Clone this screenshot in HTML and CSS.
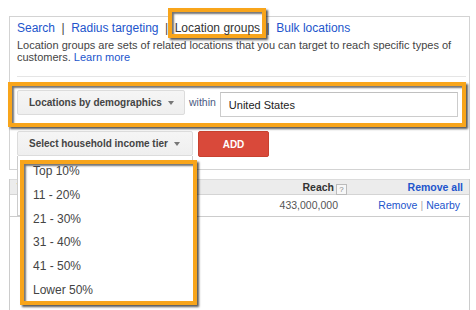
FILE: index.html
```html
<!DOCTYPE html>
<html lang="en">
<head>
    <meta charset="UTF-8">
    <meta name="viewport" content="width=device-width, initial-scale=1.0">
    <title>Location groups</title>
    <link rel="stylesheet" href="styles.css">
</head>
<body>
    <div class="panel">
        <div class="tabs">
            <a class="tab" href="#">Search</a><span class="sep">|</span><a class="tab" href="#">Radius targeting</a><span class="sep">|</span><span class="tab tab-current">Location groups</span><span class="sep">|</span><a class="tab" href="#">Bulk locations</a>
        </div>
        <p class="desc">Location groups are sets of related locations that you can target to reach specific types of customers. <a href="#">Learn more</a></p>

        <div class="row row-demo">
            <button class="btn btn-demo">Locations by demographics <span class="caret"></span></button>
            <span class="within">within</span>
            <input class="loc-input" type="text" value="United States">
        </div>

        <div class="row row-tier">
            <div class="select-wrap">
                <button class="btn btn-tier">Select household income tier <span class="caret"></span></button>
                <div class="menu-frame"></div>
                <ul class="menu">
                    <li>Top 10%</li>
                    <li>11 - 20%</li>
                    <li>21 - 30%</li>
                    <li>31 - 40%</li>
                    <li>41 - 50%</li>
                    <li>Lower 50%</li>
                </ul>
            </div>
            <button class="btn-add">ADD</button>
        </div>
    </div>

    <div class="results">
        <div class="results-head">
            <div class="head-loc">Targeted locations</div>
            <div class="head-reach">Reach<span class="help">?</span></div>
            <div class="head-actions">Remove all</div>
        </div>
        <div class="results-row">
            <div class="cell-loc"><a href="#">United States</a></div>
            <div class="cell-reach">433,000,000</div>
            <div class="cell-actions"><a href="#">Remove</a><span class="bar">|</span><a href="#">Nearby</a></div>
        </div>
    </div>
</body>
</html>
```

FILE: styles.css
```css
body {
    margin: 0;
    height: 310px;
    overflow: hidden;
    font-family: "Liberation Sans", Arial, sans-serif;
    color: #333333;
    background: #ffffff;
}

a {
    color: #2255cc;
    text-decoration: none;
}

.panel {
    position: relative;
    margin: 16px 6px 0 9px;
    border: 1px solid #d3d3d3;
    padding: 4px 3px 12px 7px;
}

.tabs {
    font-size: 12px;
    line-height: 14px;
    white-space: nowrap;
}

.tab-current {
    position: relative;
    z-index: 1;
    color: #333333;
}

.tab-current::after {
    content: "";
    position: absolute;
    left: -7px;
    right: -6px;
    top: -13px;
    bottom: -3px;
    z-index: -1;
    background: #ffffff;
    border: 4px solid #f8a51b;
    box-shadow: 2px 2px 2px rgba(0, 0, 0, 0.65), inset 2px 2px 2px rgba(0, 0, 0, 0.55);
}

.sep {
    margin: 0 6.5px;
    color: #444444;
}

.desc {
    margin: 4px 0 0;
    padding-bottom: 13px;
    border-bottom: 1px solid #e5e5e5;
    font-size: 11px;
    line-height: 12px;
    color: #444444;
}

.row {
    display: flex;
    align-items: flex-start;
}

.row-demo {
    position: relative;
    margin-top: 13px;
}

.row-demo::after {
    content: "";
    position: absolute;
    left: -9px;
    right: 0;
    top: -8px;
    bottom: -10px;
    border: 4px solid #f8a51b;
    box-shadow: 2px 2px 2px rgba(0, 0, 0, 0.65), inset 2px 2px 2px rgba(0, 0, 0, 0.55);
    pointer-events: none;
}

.btn {
    display: flex;
    align-items: center;
    box-sizing: border-box;
    height: 25px;
    padding: 0 0 0 11px;
    border: 1px solid #dcdcdc;
    border-radius: 2px;
    background: linear-gradient(#f5f5f5, #efefef);
    color: #444444;
    font: bold 10px "Liberation Sans", Arial, sans-serif;
    white-space: nowrap;
}

.btn-demo {
    width: 168px;
}

.btn-tier {
    width: 176px;
}

.caret {
    width: 0;
    height: 0;
    margin-left: 6px;
    border-left: 3.5px solid transparent;
    border-right: 3.5px solid transparent;
    border-top: 4px solid #777777;
}

.within {
    margin: 0 4px;
    font-size: 10.5px;
    line-height: 25px;
    color: #4a5a82;
}

.loc-input {
    box-sizing: border-box;
    width: 238px;
    height: 25px;
    margin: 2px 0 0;
    padding: 0 8px;
    border: 1px solid #cccccc;
    border-top-color: #c0c0c0;
    font: 11px "Liberation Sans", Arial, sans-serif;
    color: #222222;
}

.row-tier {
    margin-top: 14px;
}

.select-wrap {
    position: relative;
}

.btn-add {
    box-sizing: border-box;
    width: 71px;
    height: 26px;
    margin-left: 5px;
    border: 1px solid #c8412f;
    border-radius: 2px;
    background: #d9493a;
    color: #ffffff;
    font: bold 10px "Liberation Sans", Arial, sans-serif;
}

.menu-frame {
    position: absolute;
    left: 0;
    top: 25px;
    z-index: 2;
    box-sizing: border-box;
    width: 176px;
    height: 60px;
    border: 1px solid #cccccc;
    border-top: 0;
    background: #ffffff;
}

.menu {
    position: absolute;
    left: 3px;
    top: 29px;
    z-index: 3;
    box-sizing: border-box;
    width: 177px;
    height: 145px;
    margin: 0;
    padding: 0 0 0 9px;
    list-style: none;
    overflow: hidden;
    background: #ffffff;
    border: 4px solid #f8a51b;
    box-shadow: 2px 2px 2px rgba(0, 0, 0, 0.65), inset 2px 2px 2px rgba(0, 0, 0, 0.55);
}

.menu li {
    font-size: 12px;
    line-height: 23.8px;
    color: #444444;
}

.menu li:first-child {
    margin-top: -4px;
}

.results {
    height: 140px;
    margin: 9px 6px 0 9px;
    border-left: 1px solid #cccccc;
    border-right: 1px solid #cccccc;
    font-size: 10.5px;
}

.results-head,
.results-row {
    display: grid;
    grid-template-columns: 1fr 110px 119px;
}

.results-head {
    height: 14px;
    line-height: 14px;
    border-top: 1px solid #dcdcdc;
    border-bottom: 1px solid #d4d4d4;
    background: #ececec;
    font-weight: bold;
    color: #333333;
}

.head-loc,
.cell-loc {
    padding-left: 7px;
}

.head-reach {
    padding-right: 3px;
    text-align: right;
}

.help {
    display: inline-block;
    width: 9px;
    height: 9px;
    margin-left: 2px;
    border: 1px solid #bbbbbb;
    background: #f7f7f7;
    color: #888888;
    font-size: 8px;
    font-weight: normal;
    line-height: 9px;
    text-align: center;
    vertical-align: -1px;
}

.head-actions {
    padding-right: 6px;
    text-align: right;
    color: #2255cc;
}

.results-row {
    height: 21px;
    line-height: 21px;
    border-bottom: 1px solid #cccccc;
}

.cell-reach {
    padding-right: 12px;
    text-align: right;
    color: #555555;
}

.cell-actions {
    padding-right: 9px;
    text-align: right;
}

.bar {
    margin: 0 3px;
    color: #aaaaaa;
}
```
